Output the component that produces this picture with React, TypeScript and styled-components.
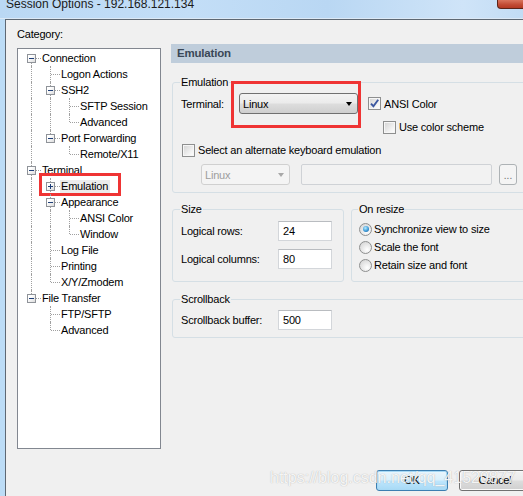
import React from 'react';
import styled, { createGlobalStyle } from 'styled-components';

const GlobalStyle = createGlobalStyle`
  html, body {
    margin: 0;
    padding: 0;
    background: #f0f0f0;
  }
  body {
    font-family: "Liberation Sans", Arial, sans-serif;
    font-size: 11px;
    letter-spacing: -0.2px;
    color: #000;
  }
`;

const Viewport = styled.div`
  position: relative;
  width: 523px;
  height: 496px;
  overflow: hidden;
  background: #bcdcf6;
`;

const Window = styled.div`
  width: 545px;
  height: 520px;
  display: flex;
  flex-direction: column;
`;

const TitleBar = styled.div`
  height: 18px;
  flex: none;
  display: flex;
  align-items: flex-start;
  overflow: hidden;
  background: linear-gradient(90deg, #bad8f4 0%, #c3def7 35%, #b9d7f3 60%, #cfe4f8 85%, #bdd9f3 100%);
  border-bottom: 1px solid #dce9f6;
`;

const TitleText = styled.div`
  margin: -2px 0 0 6px;
  font-size: 12px;
  line-height: 12px;
  letter-spacing: 0;
  color: #1b1b1b;
  white-space: nowrap;
`;

const CloseButton = styled.div`
  margin-left: auto;
  margin-right: 5px;
  width: 43px;
  height: 9px;
  box-sizing: border-box;
  border: 1px solid #5c2419;
  border-top: none;
  border-radius: 0 0 4px 4px;
  background: linear-gradient(#d9745d, #c14a33 60%, #b43a24);
`;

const Body = styled.div`
  flex: 1;
  display: flex;
`;

const FrameEdge = styled.div`
  width: 5px;
  flex: none;
  background: #bcdcf6;
`;

const Client = styled.div`
  flex: 1;
  display: flex;
  flex-direction: column;
  background: #f0f0f0;
  border-left: 1px solid #5e6873;
  border-top: 1px solid #5e6873;
  padding: 7px 14px 0 11px;
`;

const MainRow = styled.div`
  display: flex;
  align-items: flex-start;
`;

const LeftCol = styled.div`
  width: 144px;
  flex: none;
  display: flex;
  flex-direction: column;
`;

const CategoryLabel = styled.div`
  line-height: 14px;
  margin-bottom: 7px;
`;

const TreeBox = styled.div`
  height: 401px;
  box-sizing: border-box;
  border: 1px solid #828790;
  background: #fff;
  padding: 1px 0 0 4px;
`;

const TreeRow = styled.div`
  position: relative;
  display: flex;
  align-items: center;
  height: 16px;
`;

type Line = 'none' | 'full' | 'top' | 'bottom';

const Cell = styled.span<{ $v: Line; $h: boolean }>`
  position: relative;
  flex: none;
  width: 19px;
  height: 16px;

  &::before {
    content: '';
    display: ${(p) => (p.$v === 'none' ? 'none' : 'block')};
    position: absolute;
    left: 9px;
    top: ${(p) => (p.$v === 'bottom' ? '8px' : '0')};
    bottom: ${(p) => (p.$v === 'top' ? '8px' : '0')};
    border-left: 1px dotted #a0a0a0;
  }

  &::after {
    content: '';
    display: ${(p) => (p.$h ? 'block' : 'none')};
    position: absolute;
    left: 10px;
    top: 8px;
    width: 9px;
    border-top: 1px dotted #a0a0a0;
  }
`;

const Expander = styled.span<{ $plus: boolean }>`
  position: absolute;
  z-index: 1;
  left: 5px;
  top: 4px;
  width: 9px;
  height: 9px;
  box-sizing: border-box;
  border: 1px solid #8f9399;
  background: linear-gradient(135deg, #ffffff 30%, #dcdcdc);

  &::before {
    content: '';
    position: absolute;
    left: 1px;
    top: 3px;
    width: 5px;
    height: 1px;
    background: #1f3f78;
  }

  &::after {
    content: '';
    display: ${(p) => (p.$plus ? 'block' : 'none')};
    position: absolute;
    left: 3px;
    top: 1px;
    width: 1px;
    height: 5px;
    background: #1f3f78;
  }
`;

const TreeLabel = styled.span<{ $selected?: boolean }>`
  padding: 0 2px 0 1px;
  line-height: 13px;
  white-space: nowrap;
  background: ${(p) => (p.$selected ? '#ececec' : 'transparent')};
`;

const Callout = styled.div`
  position: absolute;
  box-sizing: border-box;
  border: 3px solid #ef3434;
  pointer-events: none;
`;

const TreeCallout = styled(Callout)`
  left: 17px;
  top: -5px;
  width: 82px;
  height: 23px;
`;

const RightCol = styled.div`
  width: 360px;
  flex: none;
  margin: 17px 0 0 10px;
  display: flex;
  flex-direction: column;
`;

const PageHeader = styled.div`
  height: 19px;
  line-height: 19px;
  padding-left: 6px;
  background: #bfcddb;
  color: #3a4757;
  font-weight: bold;
  font-size: 11.5px;
`;

const Group = styled.fieldset<{ $width?: number }>`
  margin: 0 0 0 1px;
  padding: 4px 8px 7px 8px;
  border: 1px solid #d5dfe5;
  border-radius: 3px;
  min-width: 0;
  flex: ${(p) => (p.$width ? 'none' : '1')};
  width: ${(p) => (p.$width ? `${p.$width}px` : 'auto')};
  box-sizing: border-box;
`;

const Legend = styled.legend`
  padding: 0 1px;
  margin-left: -1px;
  line-height: 14px;
`;

const GroupRow = styled.div`
  display: flex;
  gap: 7px;
  margin-top: 9px;
`;

const Row = styled.div<{ $indent?: number; $gap?: number }>`
  display: flex;
  align-items: center;
  margin-left: ${(p) => p.$indent ?? 0}px;
  margin-top: ${(p) => p.$gap ?? 0}px;
`;

const FieldLabel = styled.span<{ $width: number }>`
  width: ${(p) => p.$width}px;
  flex: none;
  white-space: nowrap;
`;

const ComboWrap = styled.div`
  position: relative;
`;

const Combo = styled.div`
  width: 119px;
  height: 21px;
  box-sizing: border-box;
  display: flex;
  align-items: center;
  justify-content: space-between;
  padding: 0 5px 0 3px;
  border: 1px solid #707070;
  border-radius: 3px;
  background: linear-gradient(#f3f3f3, #ebebeb 48%, #dddddd 52%, #cfcfcf);
`;

const ComboCallout = styled(Callout)`
  left: -8px;
  top: -12px;
  width: 130px;
  height: 47px;
`;

const DisabledCombo = styled.div`
  width: 89px;
  height: 21px;
  box-sizing: border-box;
  display: flex;
  align-items: center;
  justify-content: space-between;
  padding: 0 5px 0 3px;
  border: 1px solid #d0d0d0;
  border-radius: 3px;
  background: #f4f4f4;
  color: #9d9d9d;
`;

const DisabledField = styled.div`
  width: 191px;
  height: 21px;
  margin-left: 11px;
  box-sizing: border-box;
  border: 1px solid #cfd2d6;
  border-radius: 2px;
  background: #f2f2f2;
`;

const SmallButton = styled.div`
  width: 18px;
  height: 21px;
  margin-left: 7px;
  box-sizing: border-box;
  border: 1px solid #adb2b5;
  border-radius: 3px;
  background: #f4f4f4;
  color: #6d6d6d;
  font-size: 10px;
  line-height: 22px;
  text-align: center;
  letter-spacing: 0;
`;

const Arrow = styled.span<{ $color: string }>`
  width: 0;
  height: 0;
  border-left: 3.5px solid transparent;
  border-right: 3.5px solid transparent;
  border-top: 4px solid ${(p) => p.$color};
`;

const CheckRow = styled.label`
  display: flex;
  align-items: center;
  gap: 3px;
  height: 16px;
  white-space: nowrap;
`;

const CheckBox = styled.span`
  width: 13px;
  height: 13px;
  box-sizing: border-box;
  flex: none;
  display: flex;
  align-items: center;
  justify-content: center;
  border: 1px solid #8e8f8f;
  box-shadow: inset 0 0 0 1px #f6f6f6;
  background: linear-gradient(135deg, #d2d2d2, #f4f4f4 70%, #ffffff);
`;

const RadioCircle = styled.span<{ $on?: boolean }>`
  position: relative;
  width: 13px;
  height: 13px;
  box-sizing: border-box;
  flex: none;
  border-radius: 50%;
  border: 1px solid #8e8f8f;
  background: radial-gradient(circle at 65% 70%, #ffffff, #e2e2e2 60%, #cfcfcf);

  &::after {
    content: '';
    display: ${(p) => (p.$on ? 'block' : 'none')};
    position: absolute;
    left: 2.5px;
    top: 2.5px;
    width: 6px;
    height: 6px;
    border-radius: 50%;
    background: radial-gradient(circle at 40% 35%, #b8ecff, #3e9bd8 55%, #0e4f8f);
  }
`;

const RadioRow = styled.label`
  display: flex;
  align-items: center;
  gap: 2px;
  height: 18px;
  white-space: nowrap;
`;

const TextInput = styled.div`
  width: 54px;
  height: 20px;
  box-sizing: border-box;
  padding-left: 4px;
  line-height: 18px;
  border: 1px solid #d3d6da;
  border-top-color: #b9bcc0;
  background: #fff;
`;

const ButtonRow = styled.div`
  display: flex;
  justify-content: flex-end;
  gap: 11px;
  margin-top: 21px;
`;

const PushButton = styled.div<{ $default?: boolean }>`
  width: 72px;
  height: 21px;
  box-sizing: border-box;
  border: 1px solid ${(p) => (p.$default ? '#3c7fb1' : '#707070')};
  border-radius: 3px;
  box-shadow: ${(p) => (p.$default ? 'inset 0 0 0 1px #a7d9f5' : 'inset 0 0 0 1px #fafafa')};
  background: ${(p) =>
    p.$default
      ? 'linear-gradient(#eaf6fd, #d9f0fc 48%, #bee6fd 52%, #a7d9f5)'
      : 'linear-gradient(#f2f2f2, #ebebeb 48%, #dddddd 52%, #cfcfcf)'};
  text-align: center;
  line-height: 19px;
`;

const Watermark = styled.div`
  position: absolute;
  left: 270px;
  top: 469px;
  font-family: "Liberation Sans", Arial, sans-serif;
  font-size: 16px;
  letter-spacing: 0;
  color: rgba(255, 255, 255, 0.88);
  text-shadow: 0 0 1px rgba(110, 110, 110, 0.55);
  white-space: nowrap;
  pointer-events: none;
`;

interface TreeNode {
  label: string;
  children?: TreeNode[];
  collapsed?: boolean;
  selected?: boolean;
}

const tree: TreeNode[] = [
  {
    label: 'Connection',
    children: [
      { label: 'Logon Actions' },
      { label: 'SSH2', children: [{ label: 'SFTP Session' }, { label: 'Advanced' }] },
      { label: 'Port Forwarding', children: [{ label: 'Remote/X11' }] },
    ],
  },
  {
    label: 'Terminal',
    children: [
      { label: 'Emulation', collapsed: true, selected: true, children: [{ label: 'Modes' }] },
      { label: 'Appearance', children: [{ label: 'ANSI Color' }, { label: 'Window' }] },
      { label: 'Log File' },
      { label: 'Printing' },
      { label: 'X/Y/Zmodem' },
    ],
  },
  { label: 'File Transfer', children: [{ label: 'FTP/SFTP' }, { label: 'Advanced' }] },
];

interface CellInfo {
  v: Line;
  h: boolean;
  box?: 'plus' | 'minus';
}

interface FlatRow {
  label: string;
  cells: CellInfo[];
  selected?: boolean;
}

function flatten(nodes: TreeNode[], guides: boolean[], out: FlatRow[]) {
  nodes.forEach((node, i) => {
    const last = i === nodes.length - 1;
    const firstRoot = guides.length === 0 && i === 0;
    const own: Line = firstRoot ? (last ? 'none' : 'bottom') : last ? 'top' : 'full';
    const hasKids = !!node.children?.length;
    out.push({
      label: node.label,
      selected: node.selected,
      cells: [
        ...guides.map((g) => ({ v: (g ? 'full' : 'none') as Line, h: false })),
        { v: own, h: true, box: hasKids ? (node.collapsed ? 'plus' : 'minus') : undefined },
      ],
    });
    if (hasKids && !node.collapsed) flatten(node.children!, [...guides, !last], out);
  });
  return out;
}

const rows = flatten(tree, [], []);

function Check({ checked }: { checked?: boolean }) {
  return (
    <CheckBox>
      {checked && (
        <svg width="9" height="9" viewBox="0 0 9 9">
          <path d="M1 4.6 L3.4 7.2 L8.2 0.8" stroke="#3b57a0" strokeWidth="1.9" fill="none" />
        </svg>
      )}
    </CheckBox>
  );
}

export default function App() {
  return (
    <Viewport>
      <GlobalStyle />
      <Window>
        <TitleBar>
          <TitleText>Session Options - 192.168.121.134</TitleText>
          <CloseButton />
        </TitleBar>
        <Body>
          <FrameEdge />
          <Client>
            <MainRow>
              <LeftCol>
                <CategoryLabel>Category:</CategoryLabel>
                <TreeBox>
                  {rows.map((row, idx) => (
                    <TreeRow key={idx}>
                      {row.cells.map((c, ci) => (
                        <Cell key={ci} $v={c.v} $h={c.h}>
                          {c.box && <Expander $plus={c.box === 'plus'} />}
                        </Cell>
                      ))}
                      <TreeLabel $selected={row.selected}>{row.label}</TreeLabel>
                      {row.selected && <TreeCallout />}
                    </TreeRow>
                  ))}
                </TreeBox>
              </LeftCol>

              <RightCol>
                <PageHeader>Emulation</PageHeader>

                <Group style={{ marginTop: 12 }}>
                  <Legend>Emulation</Legend>
                  <Row>
                    <FieldLabel $width={58}>Terminal:</FieldLabel>
                    <ComboWrap>
                      <Combo>
                        <span>Linux</span>
                        <Arrow $color="#000" />
                      </Combo>
                      <ComboCallout />
                    </ComboWrap>
                    <CheckRow style={{ marginLeft: 10 }}>
                      <Check checked />
                      ANSI Color
                    </CheckRow>
                  </Row>
                  <Row $indent={202} $gap={5}>
                    <CheckRow>
                      <Check />
                      Use color scheme
                    </CheckRow>
                  </Row>
                  <Row $indent={1} $gap={7}>
                    <CheckRow>
                      <Check />
                      Select an alternate keyboard emulation
                    </CheckRow>
                  </Row>
                  <Row $indent={20} $gap={6}>
                    <DisabledCombo>
                      <span>Linux</span>
                      <Arrow $color="#a8a8a8" />
                    </DisabledCombo>
                    <DisabledField />
                    <SmallButton>...</SmallButton>
                  </Row>
                </Group>

                <GroupRow>
                  <Group $width={172} style={{ paddingBottom: 9, paddingTop: 5 }}>
                    <Legend>Size</Legend>
                    <Row>
                      <FieldLabel $width={97}>Logical rows:</FieldLabel>
                      <TextInput>24</TextInput>
                    </Row>
                    <Row $gap={8}>
                      <FieldLabel $width={97}>Logical columns:</FieldLabel>
                      <TextInput>80</TextInput>
                    </Row>
                  </Group>
                  <Group style={{ paddingLeft: 7, paddingTop: 4, marginLeft: 0 }}>
                    <Legend>On resize</Legend>
                    <RadioRow>
                      <RadioCircle $on />
                      Synchronize view to size
                    </RadioRow>
                    <RadioRow>
                      <RadioCircle />
                      Scale the font
                    </RadioRow>
                    <RadioRow>
                      <RadioCircle />
                      Retain size and font
                    </RadioRow>
                  </Group>
                </GroupRow>

                <Group style={{ marginTop: 10 }}>
                  <Legend>Scrollback</Legend>
                  <Row>
                    <FieldLabel $width={97}>Scrollback buffer:</FieldLabel>
                    <TextInput>500</TextInput>
                  </Row>
                </Group>
              </RightCol>
            </MainRow>

            <ButtonRow>
              <PushButton $default>OK</PushButton>
              <PushButton>Cancel</PushButton>
            </ButtonRow>
          </Client>
        </Body>
      </Window>
      <Watermark>https://blog.csdn.net/qq_41520877</Watermark>
    </Viewport>
  );
}
